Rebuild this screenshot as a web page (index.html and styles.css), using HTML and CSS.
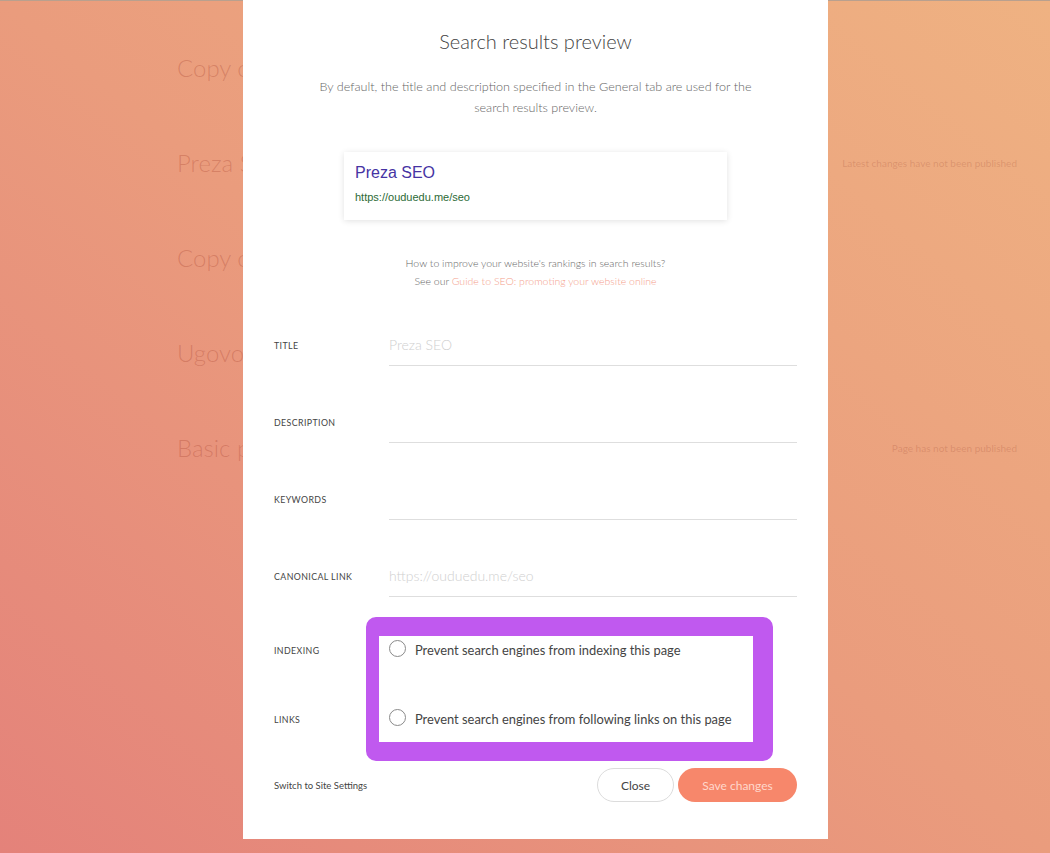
FILE: index.html
```html
<!DOCTYPE html>
<html lang="en">
<head>
<meta charset="utf-8">
<title>Search results preview</title>
<link rel="stylesheet" href="styles.css">
</head>
<body>
<div class="page">
  <ul class="pages">
    <li class="page-row"><span class="page-name">Copy of Preza SEO</span><span class="page-status"></span></li>
    <li class="page-row"><span class="page-name">Preza SEO</span><span class="page-status">Latest changes have not been published</span></li>
    <li class="page-row"><span class="page-name">Copy of Ugovor</span><span class="page-status"></span></li>
    <li class="page-row"><span class="page-name">Ugovor</span><span class="page-status"></span></li>
    <li class="page-row"><span class="page-name">Basic page</span><span class="page-status short">Page has not been published</span></li>
  </ul>
</div>

<div class="modal">
  <h1 class="modal-title">Search results preview</h1>
  <p class="modal-desc">By default, the title and description specified in the General tab are used for the search results preview.</p>

  <div class="serp">
    <div class="serp-title">Preza SEO</div>
    <div class="serp-url">https://ouduedu.me/seo</div>
  </div>

  <p class="help">How to improve your website's rankings in search results?<br>See our <a class="help-link" href="#">Guide to SEO: promoting your website online</a></p>

  <div class="form">
    <div class="field">
      <span class="label">Title</span>
      <span class="input placeholder">Preza SEO</span>
    </div>
    <div class="field">
      <span class="label">Description</span>
      <span class="input"></span>
    </div>
    <div class="field">
      <span class="label">Keywords</span>
      <span class="input"></span>
    </div>
    <div class="field">
      <span class="label">Canonical link</span>
      <span class="input placeholder">https://ouduedu.me/seo</span>
    </div>

    <div class="check first">
      <span class="label">Indexing</span>
      <span class="option"><span class="radio"></span>Prevent search engines from indexing this page</span>
    </div>
    <div class="check second">
      <span class="label">Links</span>
      <span class="option"><span class="radio"></span>Prevent search engines from following links on this page</span>
    </div>
  </div>

  <div class="footer">
    <a class="switch" href="#">Switch to Site Settings</a>
    <div class="buttons">
      <button class="btn btn-close">Close</button>
      <button class="btn btn-save">Save changes</button>
    </div>
  </div>

  <div class="highlight"></div>
</div>
</body>
</html>
```

FILE: styles.css
```css
* { box-sizing: border-box; }

html, body {
  margin: 0;
  height: 100%;
}

body {
  font-family: "Lato", "Noto Sans", sans-serif;
  background: linear-gradient(to bottom left, #efb282 0%, #ea9c7d 50%, #e4827a 100%);
  border-top: 1px solid #b9a08e;
  overflow: hidden;
}

.page {
  height: 100%;
}

.pages {
  list-style: none;
  margin: 0;
  padding: 19px 33px 0 177px;
}

.page-row {
  display: flex;
  justify-content: space-between;
  align-items: center;
  height: 95px;
}

.page-name {
  white-space: nowrap;
  font-size: 24px;
  font-weight: 300;
  color: rgba(170, 70, 50, 0.32);
}

.page-status {
  font-size: 10px;
  color: rgba(150, 60, 40, 0.22);
}

.modal {
  position: absolute;
  left: 243px;
  top: 0;
  width: 585px;
  height: 839px;
  background: #fff;
  padding: 29px 31px 0 31px;
}

.modal-title {
  margin: 0;
  font-size: 20px;
  line-height: 24px;
  font-weight: 300;
  color: #444;
  text-align: center;
}

.modal-desc {
  margin: 23px auto 0;
  width: 450px;
  font-size: 12.6px;
  line-height: 21px;
  font-weight: 300;
  color: #666;
  text-align: center;
}

.serp {
  width: 383px;
  height: 68px;
  margin: 34px auto 0;
  padding: 11px 11px 0;
  background: #fff;
  box-shadow: 0 1px 6px rgba(0, 0, 0, 0.12);
  font-family: "Liberation Sans", Arial, sans-serif;
}

.serp-title {
  font-size: 16px;
  line-height: 20px;
  color: #4633a3;
}

.serp-url {
  margin-top: 7px;
  font-size: 11px;
  line-height: 14px;
  color: #2c6a36;
}

.help {
  margin: 34px 0 0;
  font-size: 10.5px;
  line-height: 18px;
  font-weight: 300;
  color: #666;
  text-align: center;
}

.help-link {
  color: #f4a08c;
  text-decoration: none;
}

.form {
  margin-top: 34px;
}

.field {
  display: grid;
  grid-template-columns: 115px 1fr;
  align-items: center;
  height: 42px;
  margin-bottom: 35px;
}

.label {
  font-size: 8.8px;
  letter-spacing: 0.4px;
  text-transform: uppercase;
  color: #444;
}

.input {
  display: flex;
  align-items: center;
  height: 42px;
  border-bottom: 1px solid #dedede;
  font-size: 14px;
  font-weight: 300;
  color: #444;
}

.placeholder {
  color: #cfcfcf;
}

.check {
  display: grid;
  grid-template-columns: 115px 1fr;
  align-items: center;
  height: 30px;
}

.check.first { margin-top: 38px; }
.check.second { margin-top: 39px; }

.option {
  display: flex;
  align-items: center;
  gap: 9px;
  font-size: 12.9px;
  color: #444;
}

.radio {
  flex: none;
  width: 17px;
  height: 17px;
  border: 1px solid #8a8a8a;
  border-radius: 50%;
  margin-top: -3px;
}

.footer {
  display: flex;
  justify-content: space-between;
  align-items: center;
  margin-top: 34px;
}

.switch {
  font-size: 9.5px;
  color: #444;
  text-decoration: none;
}

.buttons {
  display: flex;
  gap: 4px;
}

.btn {
  height: 34px;
  border-radius: 17px;
  font-family: "Lato", "Noto Sans", sans-serif;
  font-size: 12px;
  cursor: pointer;
}

.btn-close {
  width: 77px;
  background: #fff;
  border: 1px solid #dcdcdc;
  color: #444;
}

.btn-save {
  width: 119px;
  background: #f7876b;
  border: none;
  color: #ffd8cb;
}

.highlight {
  position: absolute;
  left: 123px;
  top: 617px;
  width: 407px;
  height: 144px;
  border-style: solid;
  border-color: #c059ef;
  border-width: 19px 20px 19px 13px;
  border-radius: 10px;
  pointer-events: none;
}
```
